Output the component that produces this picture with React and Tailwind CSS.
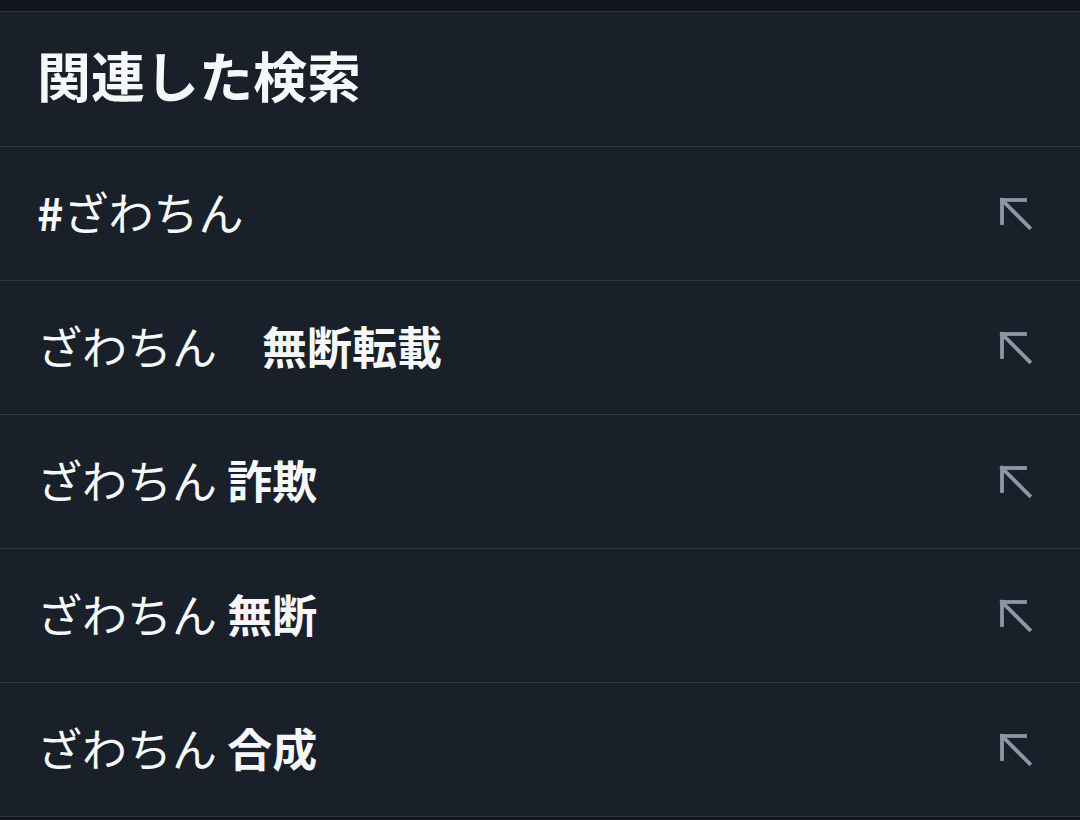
import React from 'react';

const rows = [
    { base: '', extra: '#', tail: 'ざわちん', hash: true },
    { base: 'ざわちん', extra: '　無断転載' },
    { base: 'ざわちん', extra: ' 詐欺' },
    { base: 'ざわちん', extra: ' 無断' },
    { base: 'ざわちん', extra: ' 合成' },
];

const ArrowUpLeft = () => (
    <svg width="40" height="40" viewBox="0 0 40 40" fill="none" stroke="#8b98a5" strokeWidth="3.8" strokeLinecap="square">
        <path d="M6 6H29" />
        <path d="M6 6V29" />
        <path d="M6 6L33.5 33.5" />
    </svg>
);

const App = () => {
    return (
        <div
            className="w-[1080px] h-[820px] bg-[#11161d] overflow-hidden text-[#f5f7f8]"
            style={{ fontFamily: '"Noto Sans CJK JP", "Noto Sans", sans-serif' }}
        >
            <div className="h-[11px]"></div>
            <div className="border-t border-[#2f3640] bg-[#19202a]">
                {/* Header */}
                <div className="h-[134px] flex items-center pl-[37px] pb-[9px]">
                    <h2 className="text-[54px] font-bold leading-none">関連した検索</h2>
                </div>

                {rows.map((r, i) => (
                    <div
                        key={i}
                        className="h-[134px] border-t border-[#2f3640] flex items-center justify-between pl-[37px] pr-[44px]"
                    >
                        <div className="text-[45px] leading-none whitespace-pre pb-[4px]">
                            {r.hash ? (
                                <>
                                    <span className="font-bold">#</span>
                                    <span>{r.tail}</span>
                                </>
                            ) : (
                                <>
                                    <span>{r.base}</span>
                                    <span className="font-bold">{r.extra}</span>
                                </>
                            )}
                        </div>
                        <ArrowUpLeft />
                    </div>
                ))}
                <div className="border-t border-[#2f3640]"></div>
            </div>
        </div>
    );
};

export default App;
